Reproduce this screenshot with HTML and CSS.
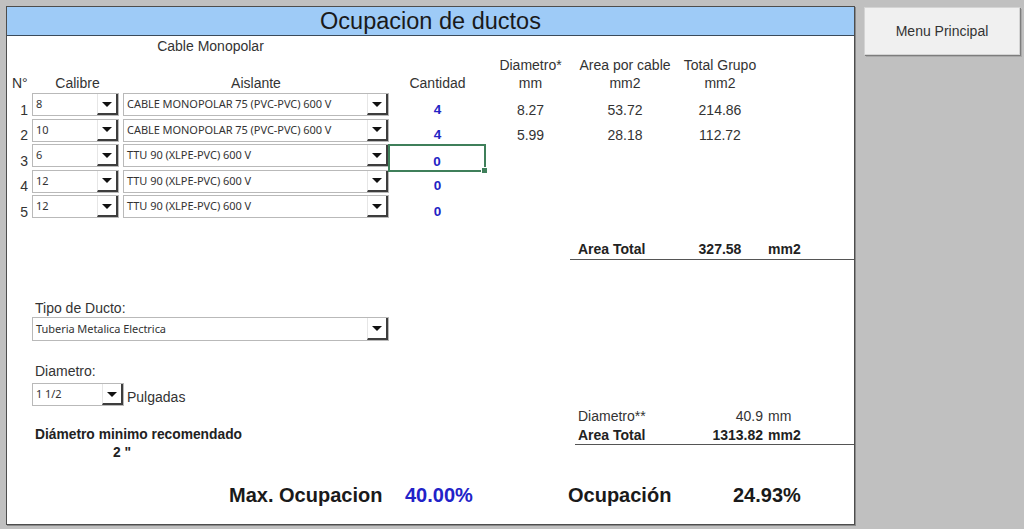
FILE: index.html
```html
<!DOCTYPE html>
<html lang="es">
<head>
<meta charset="utf-8">
<title>Ocupacion de ductos</title>
<link rel="stylesheet" href="styles.css">
</head>
<body>
<div class="sheet">
  <div class="title">Ocupacion de ductos</div>

  <div class="table">
    <div class="row caption"><div class="c-span">Cable Monopolar</div></div>
    <div class="row hdr-a">
      <div class="c5">Diametro*</div>
      <div class="c6">Area por cable</div>
      <div class="c7">Total Grupo</div>
    </div>
    <div class="row hdr-b">
      <div class="c1 left">N°</div>
      <div class="c2">Calibre</div>
      <div class="c3">Aislante</div>
      <div class="c4">Cantidad</div>
      <div class="c5">mm</div>
      <div class="c6">mm2</div>
      <div class="c7">mm2</div>
    </div>

    <div class="row data">
      <div class="idx">1</div>
      <div class="combo cal"><span class="val">8</span><span class="btn"></span></div>
      <div class="combo ais"><span class="val">CABLE MONOPOLAR 75 (PVC-PVC) 600 V</span><span class="btn"></span></div>
      <div class="qty">4</div>
      <div class="num">8.27</div>
      <div class="num">53.72</div>
      <div class="num">214.86</div>
    </div>
    <div class="row data">
      <div class="idx">2</div>
      <div class="combo cal"><span class="val">10</span><span class="btn"></span></div>
      <div class="combo ais"><span class="val">CABLE MONOPOLAR 75 (PVC-PVC) 600 V</span><span class="btn"></span></div>
      <div class="qty">4</div>
      <div class="num">5.99</div>
      <div class="num">28.18</div>
      <div class="num">112.72</div>
    </div>
    <div class="row data">
      <div class="idx">3</div>
      <div class="combo cal"><span class="val">6</span><span class="btn"></span></div>
      <div class="combo ais"><span class="val">TTU 90 (XLPE-PVC) 600 V</span><span class="btn"></span></div>
      <div class="qty sel">0</div>
    </div>
    <div class="row data">
      <div class="idx">4</div>
      <div class="combo cal"><span class="val">12</span><span class="btn"></span></div>
      <div class="combo ais"><span class="val">TTU 90 (XLPE-PVC) 600 V</span><span class="btn"></span></div>
      <div class="qty">0</div>
    </div>
    <div class="row data">
      <div class="idx">5</div>
      <div class="combo cal"><span class="val">12</span><span class="btn"></span></div>
      <div class="combo ais"><span class="val">TTU 90 (XLPE-PVC) 600 V</span><span class="btn"></span></div>
      <div class="qty">0</div>
    </div>
  </div>

  <div class="total-row">
    <div class="t-label">Area Total</div>
    <div class="t-val">327.58</div>
    <div class="t-unit">mm2</div>
  </div>

  <div class="lower">
    <div class="left-col">
      <div class="lbl">Tipo de Ducto:</div>
      <div class="combo duct"><span class="val">Tuberia Metalica Electrica</span><span class="btn"></span></div>
      <div class="lbl lbl-gap">Diametro:</div>
      <div class="diam-line">
        <div class="combo small"><span class="val">1 1/2</span><span class="btn"></span></div>
        <span class="unit">Pulgadas</span>
      </div>
      <div class="lbl bold rec">Diámetro minimo recomendado</div>
      <div class="rec-val">2 "</div>
    </div>
    <div class="right-col">
      <div class="r-row">
        <div class="r-label">Diametro**</div>
        <div class="r-val">40.9</div>
        <div class="r-unit">mm</div>
      </div>
      <div class="r-row bold">
        <div class="r-label">Area Total</div>
        <div class="r-val">1313.82</div>
        <div class="r-unit">mm2</div>
      </div>
    </div>
  </div>

  <div class="footer">
    <div>Max. Ocupacion</div>
    <div class="blue">40.00%</div>
    <div>Ocupación</div>
    <div>24.93%</div>
  </div>
</div>

<div class="menu-btn">Menu Principal</div>
</body>
</html>
```
FILE: styles.css
```css
* { box-sizing: border-box; }

html, body {
  margin: 0;
  width: 1024px;
  height: 529px;
  overflow: hidden;
}

body {
  background: #c0c0c0;
  font-family: "Liberation Sans", Arial, sans-serif;
  color: #222;
  display: flex;
  align-items: flex-start;
  padding: 6px 0 0 6px;
}

.sheet {
  width: 849px;
  height: 519px;
  background: #fff;
  border: 1px solid #4d4d4d;
  box-shadow: 1px 1px 0 #8a8a8a;
  display: flex;
  flex-direction: column;
}

.title {
  height: 29px;
  background: #9ecbf7;
  border-bottom: 1px solid #3a4a5a;
  text-align: center;
  font-size: 23.5px;
  line-height: 28px;
  color: #1a1a1a;
}

/* cable table */
.row {
  display: grid;
  grid-template-columns: 25px 91px 266px 97px 89px 100px 90px 1fr;
  font-size: 14px;
}

.row > div { text-align: center; }

.caption { height: 20px; line-height: 20px; color: #333; }
.caption .c-span { grid-column: 2 / 4; }

.hdr-a { height: 18px; line-height: 18px; color: #333; }
.hdr-a .c5 { grid-column: 5; }
.hdr-a .c6 { grid-column: 6; }
.hdr-a .c7 { grid-column: 7; }

.hdr-b { height: 19px; line-height: 19px; color: #333; }
.hdr-b .left { text-align: left; padding-left: 5px; }

.data { height: 25.5px; }

.idx {
  align-self: end;
  text-align: right !important;
  padding-right: 4px;
  line-height: 16px;
  padding-bottom: 1px;
  color: #333;
}

.num, .qty {
  align-self: end;
  line-height: 16px;
  padding-bottom: 1px;
}

.num { color: #333; }

.qty {
  color: #2323c4;
  font-weight: bold;
  font-size: 13.5px;
}

.qty.sel {
  align-self: stretch;
  margin: 0 0 -2px -1px;
  border: 2px solid #3f7f5a;
  display: flex;
  align-items: flex-end;
  justify-content: center;
  padding-bottom: 0;
  position: relative;
}

.qty.sel::after {
  content: "";
  position: absolute;
  right: -4px;
  bottom: -4px;
  width: 5px;
  height: 5px;
  background: #3f7f5a;
  border: 1px solid #fff;
}

/* combo boxes */
.combo {
  height: 23px;
  border: 1px solid #b9b9b9;
  background: #fff;
  display: flex;
  align-items: stretch;
  text-align: left !important;
  font-family: "Noto Sans", "Open Sans", sans-serif;
  font-size: 11px;
  letter-spacing: -0.05px;
  color: #333;
}

.combo .val {
  flex: 1;
  padding-left: 3px;
  line-height: 19px;
  white-space: nowrap;
  overflow: hidden;
}

.combo .btn {
  width: 21px;
  flex: none;
  border-left: 1px solid #e6e6e6;
  border-right: 2px solid #3d3d3d;
  border-bottom: 2px solid #3d3d3d;
  display: flex;
  align-items: center;
  justify-content: center;
}

.combo .btn::before {
  content: "";
  width: 0;
  height: 0;
  border-left: 5px solid transparent;
  border-right: 5px solid transparent;
  border-top: 5px solid #111;
  margin-top: 1px;
}

.combo.cal { width: 87px; }
.combo.ais { width: 266px; }

/* area total row */
.total-row {
  margin: 19.5px 0 0 563px;
  height: 20px;
  border-bottom: 1px solid #555;
  display: grid;
  grid-template-columns: 105px 90px 1fr;
  font-size: 14px;
  font-weight: bold;
  line-height: 19px;
}

.t-label { padding-left: 8px; }
.t-val { text-align: center; }
.t-unit { padding-left: 3px; }

/* lower section */
.lower {
  display: grid;
  grid-template-columns: 563px 1fr;
}

.left-col {
  padding-left: 25px;
  padding-top: 39px;
}

.lbl {
  font-size: 14px;
  line-height: 18px;
  padding-left: 3px;
  color: #333;
}

.lbl-gap { margin-top: 21px; }

.combo.duct { width: 357px; height: 24px; }
.combo.duct .val { line-height: 21px; }

.diam-line {
  display: flex;
  align-items: flex-end;
  margin-top: 3px;
  gap: 3px;
}

.combo.small { width: 92px; }

.unit {
  font-size: 14px;
  line-height: 18px;
  color: #333;
}

.bold { font-weight: bold; }

.lbl.rec {
  margin-top: 20px;
  color: #222;
  font-size: 13.8px;
}

.rec-val {
  font-weight: bold;
  font-size: 13.8px;
  line-height: 18px;
  padding-left: 81px;
}

.right-col {
  align-self: end;
  margin: 0 0 17px 5px;
  border-bottom: 1px solid #555;
}

.r-row {
  display: grid;
  grid-template-columns: 100px 90px 1fr;
  font-size: 14px;
  line-height: 18.5px;
}

.r-label { padding-left: 3px; }
.r-val { text-align: right; padding-right: 2px; }
.r-unit { padding-left: 3px; }

.r-row:first-child { color: #333; }

/* footer */
.footer {
  margin-top: 21px;
  padding-left: 222px;
  display: grid;
  grid-template-columns: 176px 163px 165px auto;
  font-size: 20px;
  font-weight: bold;
  line-height: 24px;
  color: #1a1a1a;
}

.blue { color: #2222c8; }

/* menu button */
.menu-btn {
  margin: 1px 0 0 9px;
  width: 156px;
  height: 48px;
  background: #f0f0f0;
  border: 1px solid #d4d4d4;
  box-shadow: 1px 1px 0 #7d7d7d, 2px 2px 0 #a8a8a8;
  font-size: 14px;
  color: #333;
  display: flex;
  align-items: center;
  justify-content: center;
}
```
